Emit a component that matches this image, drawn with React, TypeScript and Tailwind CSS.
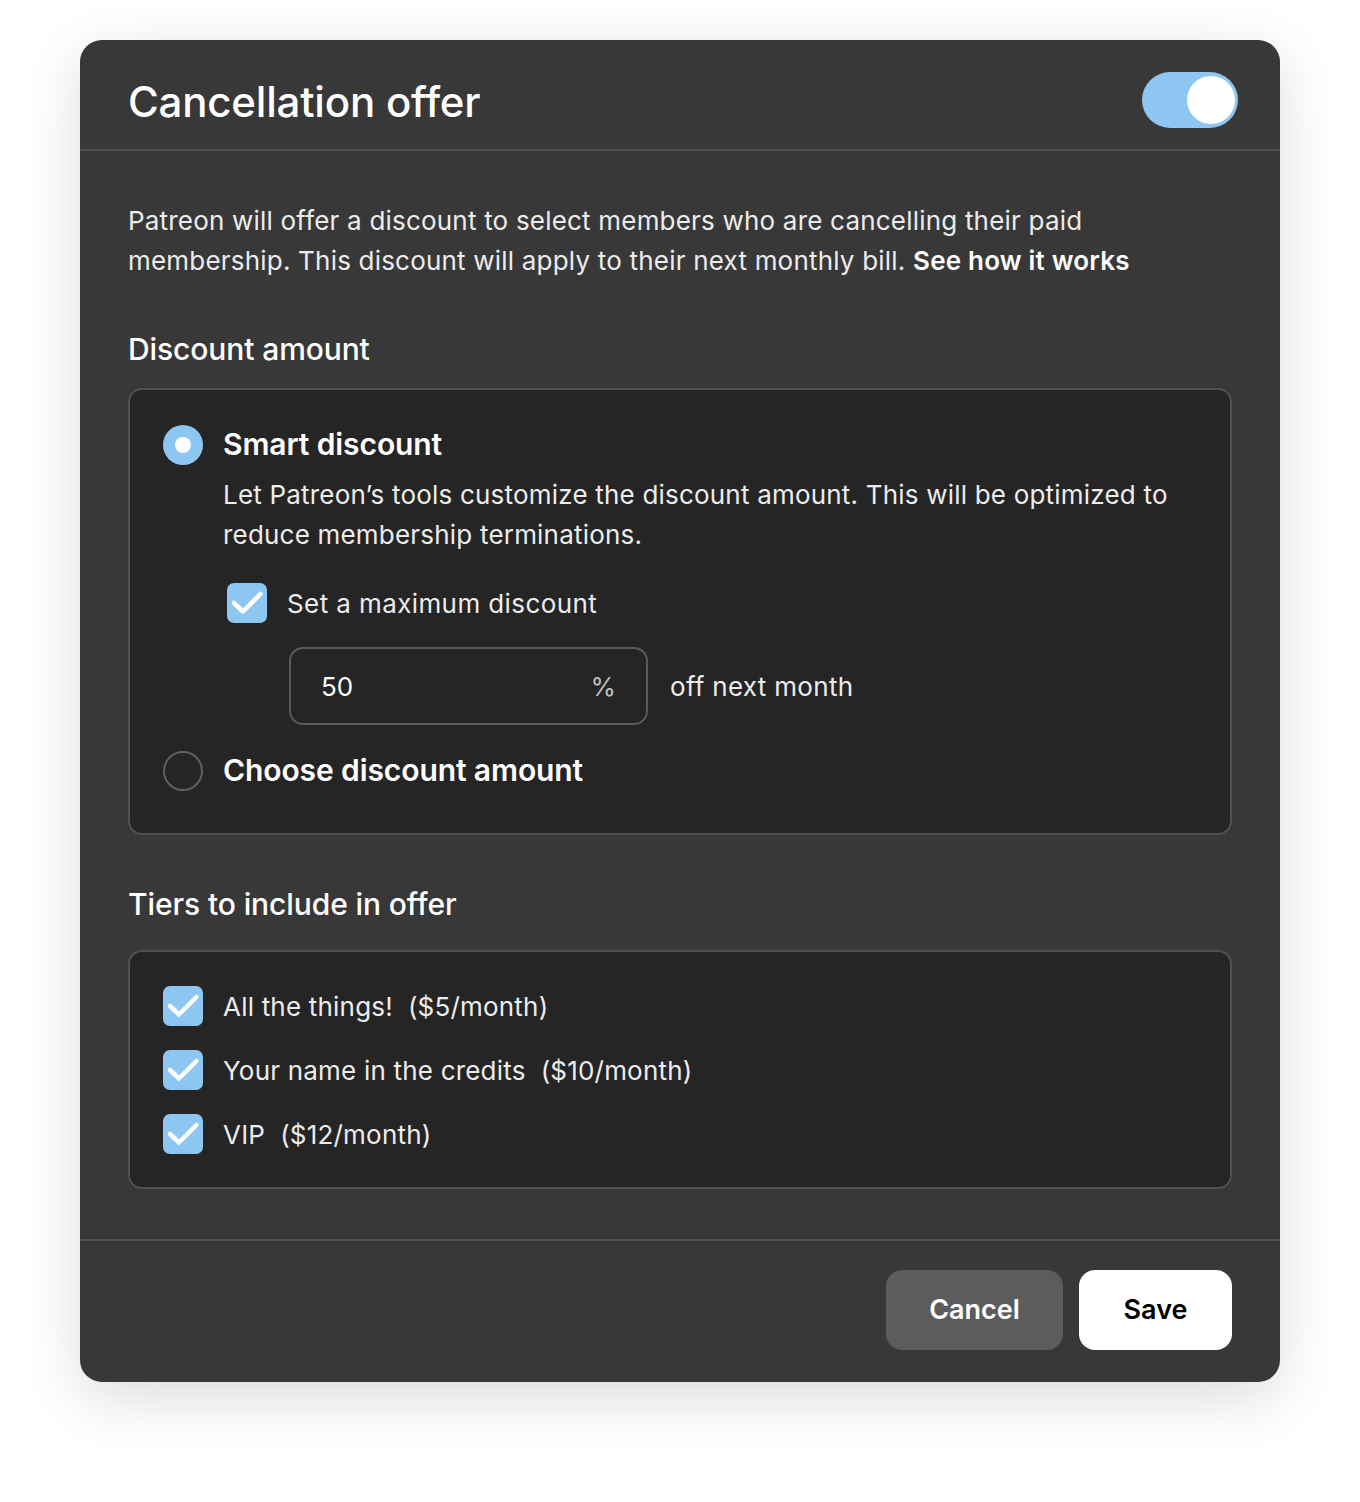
import React from "react";

function Check({ className = "" }: { className?: string }) {
  return (
    <span className={"flex h-10 w-10 shrink-0 items-center justify-center rounded-[7px] bg-[#8ec6f2] " + className}>
      <svg width="40" height="40" viewBox="0 0 40 40" fill="none">
        <path d="M7 20 L16 28.5 L33.5 11" stroke="white" strokeWidth="4.5" strokeLinecap="round" strokeLinejoin="round" />
      </svg>
    </span>
  );
}

export default function App() {
  return (
    <div className="min-h-[1502px] w-full bg-white pt-10" style={{ fontFamily: "Inter, 'Noto Sans', sans-serif" }}>
      <div className="mx-20 flex flex-col overflow-hidden rounded-[22px] bg-[#383838] text-white shadow-[0_16px_60px_rgba(0,0,0,0.14)]">
        {/* Header */}
        <div className="flex h-[111px] items-center justify-between border-b-2 border-[#505050] pl-12 pr-[42px] pt-[11px]">
          <h1 className="mt-[4px] text-[42px] font-medium leading-[50px] tracking-[-0.2px]">Cancellation offer</h1>
          <div className="flex h-14 w-24 items-center justify-end rounded-full bg-[#8ec6f2] pr-[3px]">
            <div className="h-[48px] w-[48px] rounded-full bg-white" />
          </div>
        </div>

        {/* Body */}
        <div className="flex flex-col px-12 pb-[50px] pt-[50px]">
          <p className="text-[26px] leading-[40px] text-[#ececec] tracking-[0.2px]">
            Patreon will offer a discount to select members who are cancelling their paid membership. This discount will apply to their next monthly bill.{" "}
            <span className="font-semibold text-white">See how it works</span>
          </p>

          <h2 className="mt-[46px] text-[30px] font-medium leading-[45px] tracking-[-0.1px]">Discount amount</h2>
          <div className="mt-[16px] rounded-[14px] border-2 border-[#505050] bg-[#252525] px-[33px] pb-[40px] pt-[32px]">
            <div className="flex items-center gap-5">
              <span className="flex h-10 w-10 shrink-0 items-center justify-center rounded-full bg-[#8ec6f2]">
                <span className="h-4 w-4 rounded-full bg-white" />
              </span>
              <span className="text-[30px] font-semibold tracking-[-0.1px]">Smart discount</span>
            </div>
            <p className="ml-[60px] mt-[8px] text-[26px] leading-[40px] text-[#ececec] tracking-[0.2px]">
              Let Patreon’s tools customize the discount amount. This will be optimized to reduce membership terminations.
            </p>
            <div className="ml-[64px] mt-[28px] flex items-center gap-5">
              <Check />
              <span className="text-[26px] text-[#ececec] tracking-[0.4px]">Set a maximum discount</span>
            </div>
            <div className="ml-[126px] mt-[24px] flex items-center gap-[22px]">
              <div className="flex h-[78px] w-[359px] items-center justify-between rounded-[14px] border-2 border-[#5a5a5a] pl-[30px] pr-[30px]">
                <span className="text-[26px] text-white">50</span>
                <span className="text-[26px] text-[#bdbdbd]">%</span>
              </div>
              <span className="text-[26px] text-[#ececec] tracking-[0.3px]">off next month</span>
            </div>
            <div className="mt-[23px] flex items-center gap-5">
              <span className="h-10 w-10 shrink-0 rounded-full border-2 border-[#5f5f5f]" />
              <span className="text-[30px] font-semibold tracking-[-0.1px]">Choose discount amount</span>
            </div>
          </div>

          <h2 className="mt-[47px] text-[30px] font-medium leading-[45px] tracking-[-0.1px]">Tiers to include in offer</h2>
          <div className="mt-[23px] flex flex-col gap-6 rounded-[14px] border-2 border-[#505050] bg-[#252525] px-[33px] pb-[33px] pt-[34px]">
            {["All the things!  ($5/month)", "Your name in the credits  ($10/month)", "VIP  ($12/month)"].map((t) => (
              <div key={t} className="flex items-center gap-5">
                <Check />
                <span className="whitespace-pre text-[26px] text-[#ececec] tracking-[0.2px]">{t}</span>
              </div>
            ))}
          </div>
        </div>

        {/* Footer */}
        <div className="flex justify-end gap-4 border-t-2 border-[#505050] px-12 pb-[32px] pt-[29px]">
          <button className="h-20 w-[177px] rounded-[16px] bg-[#5c5c5c] text-[27px] font-semibold text-white">Cancel</button>
          <button className="h-20 w-[153px] rounded-[16px] bg-white text-[27px] font-semibold text-black">Save</button>
        </div>
      </div>
    </div>
  );
}
